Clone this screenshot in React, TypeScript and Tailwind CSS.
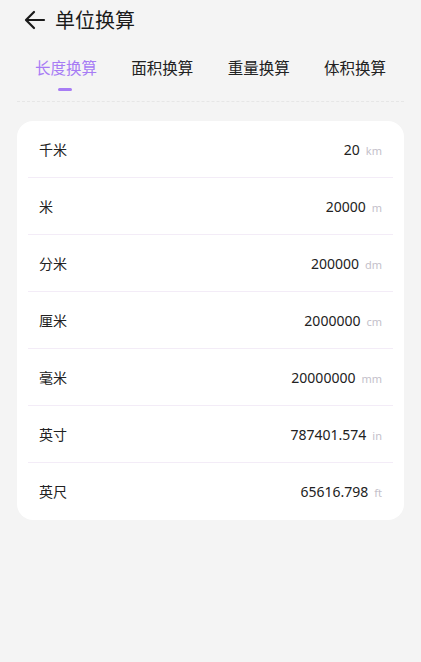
import React from "react";

const rows = [
  ["千米", "20", "km"],
  ["米", "20000", "m"],
  ["分米", "200000", "dm"],
  ["厘米", "2000000", "cm"],
  ["毫米", "20000000", "mm"],
  ["英寸", "787401.574", "in"],
  ["英尺", "65616.798", "ft"],
];

const tabs = ["长度换算", "面积换算", "重量换算", "体积换算"];

export default function App() {
  return (
    <div
      className="w-[421px] h-[662px] bg-[#f4f4f4] overflow-hidden"
      style={{ fontFamily: '"Noto Sans CJK SC", "Noto Sans", sans-serif' }}
    >
      <div className="h-[40px] flex items-center pl-[24px]">
        <svg width="22" height="20" viewBox="0 0 22 20" fill="none" stroke="#1a1a1a" strokeWidth="2.2" strokeLinecap="round" strokeLinejoin="round">
          <path d="M20 10H3" />
          <path d="M10 2L2 10L10 18" />
        </svg>
        <span className="ml-[9px] text-[20px] leading-none text-[#1a1a1a]">单位换算</span>
      </div>
      <div className="flex justify-between pl-[35px] pr-[35px] mt-[16px] h-[24px] items-center">
        {tabs.map((t, i) => (
          <span
            key={t}
            className={
              "text-[15.5px] leading-none " + (i === 0 ? "text-[#a77cf4]" : "text-[#222]")
            }
          >
            {t}
          </span>
        ))}
      </div>
      <div className="pl-[58px] mt-[8px]">
        <div className="w-[14px] h-[3px] rounded-full bg-[#a77cf4]" />
      </div>
      <div className="mx-[17px] mt-[10px] border-t border-dashed border-[#e6e6e6]" />
      <div className="mx-[17px] mt-[19px] bg-white rounded-[16px] px-[11px]">
        {rows.map(([label, value, unit], i) => (
          <div
            key={label}
            className={
              "h-[57px] flex items-center justify-between px-[11px] " +
              (i < rows.length - 1 ? "border-b border-[#f3ecf7]" : "")
            }
          >
            <span className="text-[14px] text-[#222]">{label}</span>
            <span className="flex items-baseline">
              <span className="text-[14px] text-[#222]" style={{ fontFamily: '"Noto Sans", sans-serif' }}>{value}</span>
              <span className="ml-[6px] text-[11px] text-[#c4bfca]" style={{ fontFamily: '"Noto Sans", sans-serif' }}>{unit}</span>
            </span>
          </div>
        ))}
      </div>
    </div>
  );
}
